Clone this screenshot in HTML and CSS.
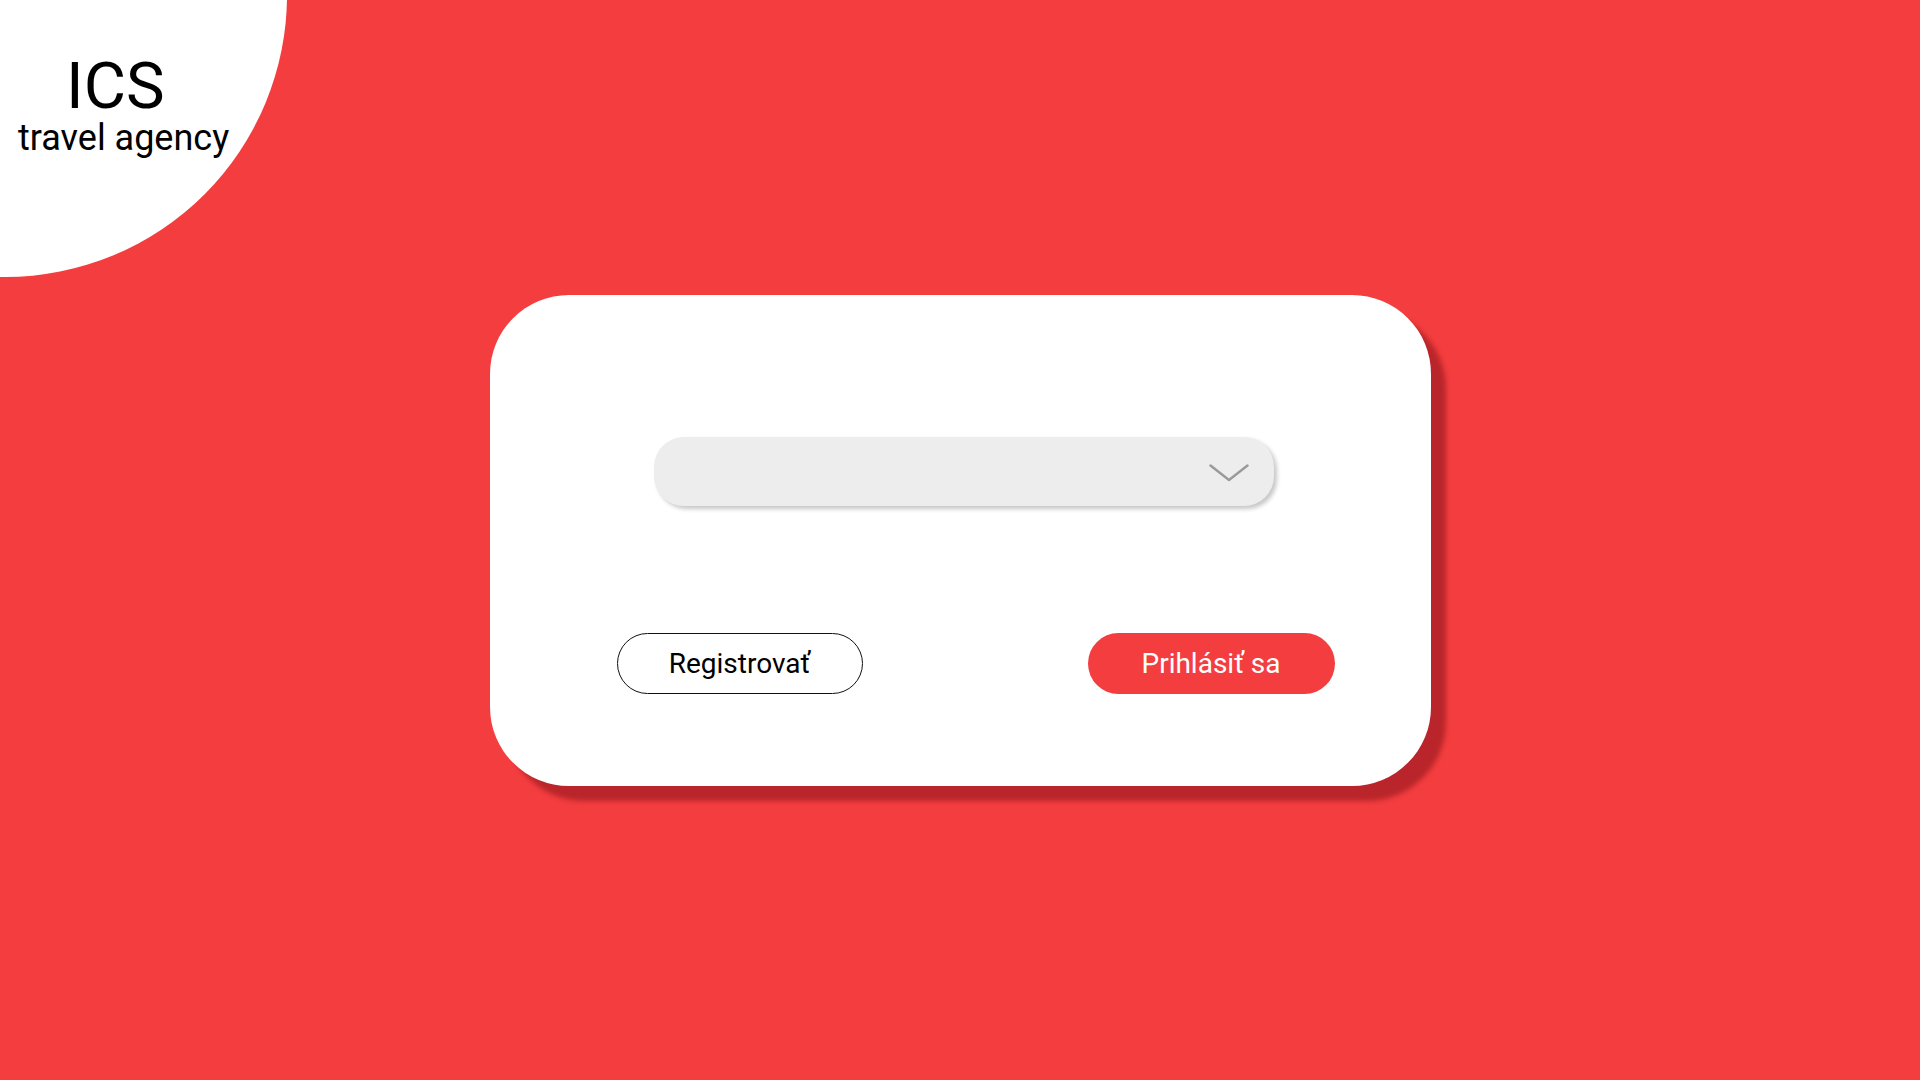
FILE: index.html
```html
<!DOCTYPE html>
<html lang="sk">
<head>
<meta charset="utf-8">
<title>ICS travel agency</title>
<link rel="stylesheet" href="styles.css">
</head>
<body>
<div class="logo-circle"></div>
<header class="logo">
  <div class="logo-title">ICS</div>
  <div class="logo-sub">travel agency</div>
</header>
<main class="page">
  <section class="card">
    <div class="select">
      <svg class="chevron" width="40" height="18" viewBox="0 0 40 18" aria-hidden="true">
        <polyline points="1.5,1.5 20,16 38.5,1.5" fill="none" stroke="#9a9a9a" stroke-width="2.4" stroke-linecap="round" stroke-linejoin="round"/>
      </svg>
    </div>
    <div class="actions">
      <button class="btn btn-outline">Registrovať</button>
      <button class="btn btn-primary">Prihlásiť sa</button>
    </div>
  </section>
</main>
</body>
</html>
```
FILE: styles.css
```css
* { box-sizing: border-box; }
html, body {
  margin: 0;
  padding: 0;
  width: 100%;
  height: 100%;
}
body {
  background: #f43d3f;
  font-family: Roboto, "Liberation Sans", sans-serif;
  overflow: hidden;
  position: relative;
}
.logo-circle {
  position: absolute;
  left: -277px;
  top: -287px;
  width: 564px;
  height: 564px;
  border-radius: 50%;
  background: #ffffff;
}
.logo {
  position: absolute;
  left: 0;
  top: 0;
  color: #000;
}
.logo-title {
  font-size: 65px;
  line-height: 65px;
  margin-top: 54px;
  padding-left: 66px;
}
.logo-sub {
  font-size: 36px;
  line-height: 36px;
  margin-top: 1px;
  padding-left: 18px;
}
.page {
  height: 100%;
  display: flex;
  align-items: center;
  justify-content: center;
}
.card {
  width: 941px;
  height: 491px;
  background: #ffffff;
  border-radius: 79px;
  box-shadow: 15px 15px 5px rgba(90, 0, 10, 0.38);
  padding: 142px 96px 0 127px;
  display: flex;
  flex-direction: column;
}
.select {
  width: 620px;
  height: 69px;
  margin-left: 37px;
  background: #ededed;
  border-radius: 30px;
  box-shadow: 3px 3px 4px rgba(0, 0, 0, 0.22);
  display: flex;
  align-items: center;
  justify-content: flex-end;
  padding-right: 25px;
}
.chevron {
  display: block;
  margin-top: 3px;
}
.actions {
  margin-top: 127px;
  display: flex;
  justify-content: space-between;
}
.btn {
  height: 61px;
  border-radius: 31px;
  font-family: Roboto, "Liberation Sans", sans-serif;
  font-size: 28px;
  padding: 0;
  cursor: pointer;
}
.btn-outline {
  width: 246px;
  background: #ffffff;
  border: 1px solid #111;
  color: #000;
}
.btn-primary {
  width: 247px;
  background: #f43d3f;
  border: none;
  color: #ffffff;
}
```
